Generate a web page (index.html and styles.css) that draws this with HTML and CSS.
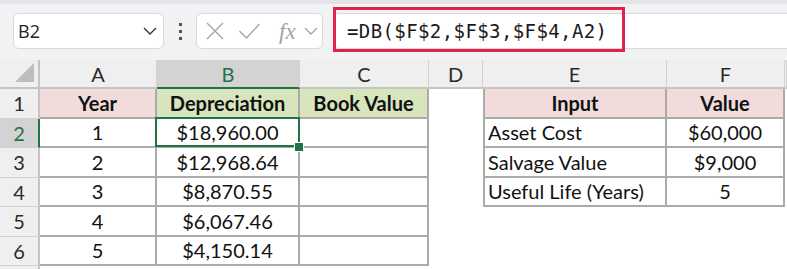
FILE: index.html
```html
<!DOCTYPE html>
<html lang="en">
<head>
  <meta charset="UTF-8">
  <title>DB depreciation</title>
  <link rel="stylesheet" href="styles.css">
</head>
<body>

<!-- Formula bar -->
<div class="formula-bar">
  <div class="name-box">
    <span>B2</span>
    <svg class="chev" width="14" height="8" viewBox="0 0 14 8"><path d="M1 1 L7 7 L13 1" fill="none" stroke="#333" stroke-width="1.4"/></svg>
  </div>
  <div class="dots"><i></i><i></i><i></i></div>
  <div class="fx-box">
    <svg width="18" height="18" viewBox="0 0 18 18"><path d="M1 1 L17 17 M17 1 L1 17" stroke="#a3a3a3" stroke-width="1.3" fill="none"/></svg>
    <svg width="21" height="16" viewBox="0 0 21 16"><path d="M0.5 8 L7.5 15 L20.5 1" stroke="#a3a3a3" stroke-width="1.3" fill="none"/></svg>
    <span class="fx">fx</span>
    <svg width="14" height="8" viewBox="0 0 14 8"><path d="M1 1 L7 7 L13 1" fill="none" stroke="#a3a3a3" stroke-width="1.3"/></svg>
  </div>
  <div class="formula">
    <span class="formula-text">=DB($F$2,$F$3,$F$4,A2)</span>
    <div class="highlight"></div>
  </div>
</div>

<!-- Sheet -->
<div class="sheet">
  <!-- column headers -->
  <div class="hd corner"><span class="tri"></span></div>
  <div class="hd">A</div>
  <div class="hd sel-hd">B</div>
  <div class="hd">C</div>
  <div class="hd">D</div>
  <div class="hd">E</div>
  <div class="hd">F</div>
  <div class="hd"></div>

  <!-- row 1 -->
  <div class="rh">1</div>
  <div class="c t pink bold">Year</div>
  <div class="c t green bold">Depreciation</div>
  <div class="c t green bold">Book Value</div>
  <div class="c"></div>
  <div class="c t tl pink bold">Input</div>
  <div class="c t pink bold">Value</div>
  <div class="c"></div>

  <!-- row 2 -->
  <div class="rh sel-rh">2</div>
  <div class="c t">1</div>
  <div class="c t active">$18,960.00<div class="sel"></div><div class="handle"></div></div>
  <div class="c t"></div>
  <div class="c"></div>
  <div class="c t tl left">Asset Cost</div>
  <div class="c t">$60,000</div>
  <div class="c"></div>

  <!-- row 3 -->
  <div class="rh">3</div>
  <div class="c t">2</div>
  <div class="c t">$12,968.64</div>
  <div class="c t"></div>
  <div class="c"></div>
  <div class="c t tl left">Salvage Value</div>
  <div class="c t">$9,000</div>
  <div class="c"></div>

  <!-- row 4 -->
  <div class="rh">4</div>
  <div class="c t">3</div>
  <div class="c t">$8,870.55</div>
  <div class="c t"></div>
  <div class="c"></div>
  <div class="c t tl left">Useful Life (Years)</div>
  <div class="c t">5</div>
  <div class="c"></div>

  <!-- row 5 -->
  <div class="rh">5</div>
  <div class="c t">4</div>
  <div class="c t">$6,067.46</div>
  <div class="c t"></div>
  <div class="c"></div>
  <div class="c"></div>
  <div class="c"></div>
  <div class="c"></div>

  <div class="rh">6</div>
  <div class="c t">5</div>
  <div class="c t">$4,150.14</div>
  <div class="c t"></div>
  <div class="c"></div>
  <div class="c"></div>
  <div class="c"></div>
  <div class="c"></div>

  <div class="rh rest"></div>
</div>

</body>
</html>
```

FILE: styles.css
```css
* { box-sizing: border-box; }
body {
  margin: 0;
  width: 787px;
  height: 269px;
  overflow: hidden;
  background: #fff;
  font-family: Lato, "Open Sans", sans-serif;
  color: #111;
}

/* ---- formula bar ---- */
.formula-bar {
  height: 60px;
  display: flex;
  align-items: flex-start;
  padding: 9px 0 0 13px;
  background: #f1f2f4;
  border-top: 4px solid #e2e4e7;
}

.name-box {
  width: 151px;
  height: 36px;
  background: #fff;
  border: 1px solid #d9d9d9;
  border-radius: 6px;
  display: flex;
  align-items: center;
  justify-content: space-between;
  padding: 0 6px 0 4px;
  font-family: "Open Sans", sans-serif;
  font-size: 18px;
  color: #222;
}

.dots {
  width: 32px;
  height: 36px;
  display: flex;
  flex-direction: column;
  align-items: center;
  justify-content: center;
  gap: 4px;
}
.dots i {
  width: 3px;
  height: 3px;
  background: #555;
}

.fx-box {
  width: 127px;
  height: 36px;
  background: #fff;
  border: 1px solid #d9d9d9;
  border-radius: 6px;
  display: flex;
  align-items: center;
  padding: 0 4px 0 9px;
}
.fx-box svg:nth-child(2) { margin-left: 15px; }
.fx {
  margin-left: 19px;
  margin-right: 8px;
  font-family: "Liberation Serif", serif;
  font-style: italic;
  font-size: 23px;
  color: #a3a3a3;
  line-height: 1;
}

.formula {
  position: relative;
  flex: 1;
  height: 36px;
  margin-left: 10px;
  margin-right: -12px;
  background: #fff;
  border: 1px solid #d9d9d9;
  border-radius: 6px 0 0 6px;
  display: flex;
  align-items: center;
  padding-left: 13px;
}
.formula-text {
  font-family: "DejaVu Sans Mono", monospace;
  font-size: 19px;
  letter-spacing: 0.4px;
  color: #1a1a1a;
}
.highlight {
  position: absolute;
  left: -1px;
  top: -7px;
  width: 292px;
  height: 45px;
  border: 3px solid #e0234d;
}

/* ---- sheet ---- */
.sheet {
  height: 209px;
  display: grid;
  grid-template-columns: 40px 117px 143px 129px 54px 184px 118px 1fr;
  grid-template-rows: 29px repeat(6, 29.5px) 1fr;
  font-size: 20px;
}

.hd {
  background: #efefef;
  border-right: 1px solid #d2d2d2;
  border-bottom: 2px solid #c4c4c4;
  display: flex;
  align-items: center;
  justify-content: center;
  color: #2a2a2a;
  font-size: 20px;
}
.corner {
  justify-content: flex-end;
  align-items: flex-end;
  padding: 0 4px 5px 0;
  border-right: 2px solid #c4c4c4;
}
.tri {
  width: 0;
  height: 0;
  border-left: 19px solid transparent;
  border-bottom: 19px solid #bdbdbd;
}
.sel-hd {
  background: #d3d3d3;
  color: #217346;
  border-bottom-color: #217346;
}

.rh {
  grid-column: 1;
  background: #efefef;
  border-right: 2px solid #c4c4c4;
  border-bottom: 1px solid #d2d2d2;
  display: flex;
  align-items: center;
  justify-content: center;
  color: #2a2a2a;
  font-size: 20px;
}
.rest { border-bottom: none; }
.sel-rh {
  background: #d3d3d3;
  color: #217346;
  border-right-color: #217346;
}

.c {
  display: flex;
  align-items: center;
  justify-content: center;
  white-space: nowrap;
}
.t {
  border-right: 2px solid #ababab;
  border-bottom: 2px solid #ababab;
}
.tl { border-left: 2px solid #ababab; }
.left {
  justify-content: flex-start;
  padding-left: 3px;
}
.bold { font-weight: 700; }
.pink { background: #f2dcdb; }
.green { background: #d8e4bc; }

/* active cell outline + fill handle */
.active {
  position: relative;
  z-index: 2;
}
.sel {
  position: absolute;
  left: -2px;
  top: -2px;
  right: -2px;
  bottom: -1px;
  border: 2px solid #217346;
}
.handle {
  position: absolute;
  right: -5px;
  bottom: -5px;
  width: 8px;
  height: 8px;
  background: #217346;
  box-shadow: 0 0 0 1px #fff;
}
```
